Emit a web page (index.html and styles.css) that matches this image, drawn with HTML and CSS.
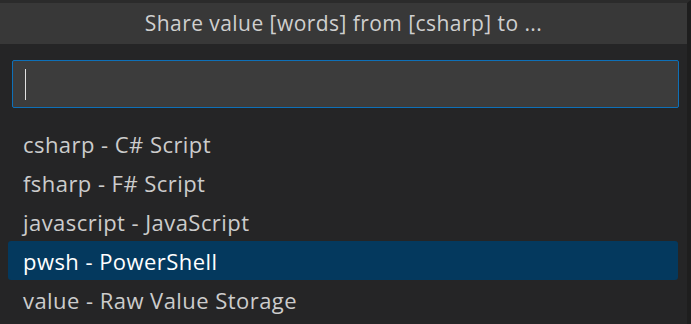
FILE: index.html
```html
<!DOCTYPE html>
<html lang="en">
<head>
  <meta charset="UTF-8" />
  <title>Share value</title>
  <link rel="stylesheet" href="styles.css">
</head>
<body>
  <div class="picker">
    <div class="picker-title">Share value [words] from [csharp] to ...</div>
    <div class="picker-input-wrap">
      <div class="picker-input"><span class="caret"></span></div>
    </div>
    <ul class="picker-list">
      <li class="picker-item">csharp - C# Script</li>
      <li class="picker-item">fsharp - F# Script</li>
      <li class="picker-item">javascript - JavaScript</li>
      <li class="picker-item selected">pwsh - PowerShell</li>
      <li class="picker-item">value - Raw Value Storage</li>
    </ul>
  </div>
</body>
</html>
```

FILE: styles.css
```css
html, body {
  margin: 0;
  height: 100%;
  background: #252526;
}
body {
  font-family: 'Open Sans', 'Noto Sans', sans-serif;
  color: #cccccc;
  overflow: hidden;
}
.picker {
  height: 324px;
  border-right: 4px solid #1e1e1e;
  border-top: 3px solid #2b2b2b;
  box-sizing: border-box;
}
.picker-title {
  height: 41px;
  background: #383838;
  color: #cfcfcf;
  font-size: 21px;
  line-height: 41px;
  text-align: center;
  letter-spacing: 0.45px;
}
.picker-input-wrap {
  padding: 16px 8px 0 12px;
}
.picker-input {
  height: 48px;
  background: #3c3c3c;
  border: 1px solid #0e70b8;
  border-radius: 2px;
  box-sizing: border-box;
  padding: 8px 12px;
}
.caret {
  display: block;
  width: 1px;
  height: 31px;
  background: #e0e0e0;
}
.picker-list {
  list-style: none;
  margin: 16px 0 0;
  padding: 0 9px 0 8px;
}
.picker-item {
  height: 39px;
  line-height: 41px;
  padding-left: 15px;
  font-size: 22px;
  letter-spacing: 0.45px;
  border-radius: 3px;
}
.picker-item.selected {
  background: #04395e;
  color: #ffffff;
}
```
